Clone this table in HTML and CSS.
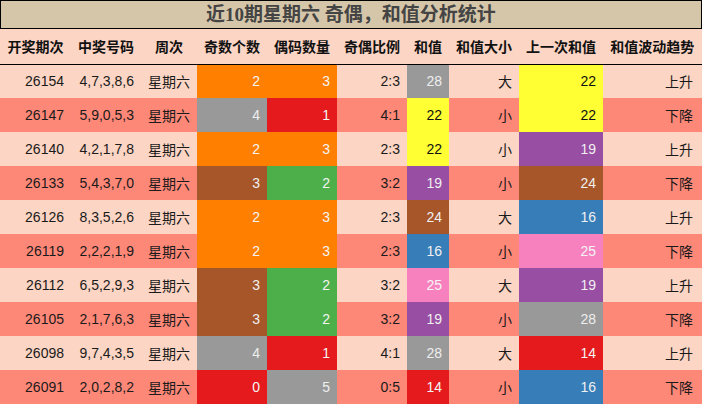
FILE: index.html
```html
<!DOCTYPE html>
<html lang="zh">
<head>
<meta charset="utf-8">
<title>近10期星期六 奇偶，和值分析统计</title>
<link rel="stylesheet" href="styles.css">
</head>
<body>
<div class="title">近10期星期六 奇偶，和值分析统计</div>
<table class="stats">
<colgroup>
<col class="w71"><col class="w70"><col class="w56"><col class="w70"><col class="w70"><col class="w70"><col class="w42"><col class="w70"><col class="w84"><col class="w99">
</colgroup>
<thead>
<tr><th>开奖期次</th><th>中奖号码</th><th>周次</th><th>奇数个数</th><th>偶码数量</th><th>奇偶比例</th><th>和值</th><th>和值大小</th><th>上一次和值</th><th>和值波动趋势</th></tr>
</thead>
<tbody>
<tr class="light"><td>26154</td><td>4,7,3,8,6</td><td>星期六</td><td class="c-orange">2</td><td class="c-orange">3</td><td>2:3</td><td class="c-gray">28</td><td>大</td><td class="c-yellow">22</td><td>上升</td></tr>
<tr class="dark"><td>26147</td><td>5,9,0,5,3</td><td>星期六</td><td class="c-gray">4</td><td class="c-red">1</td><td>4:1</td><td class="c-yellow">22</td><td>小</td><td class="c-yellow">22</td><td>下降</td></tr>
<tr class="light"><td>26140</td><td>4,2,1,7,8</td><td>星期六</td><td class="c-orange">2</td><td class="c-orange">3</td><td>2:3</td><td class="c-yellow">22</td><td>小</td><td class="c-purple">19</td><td>上升</td></tr>
<tr class="dark"><td>26133</td><td>5,4,3,7,0</td><td>星期六</td><td class="c-brown">3</td><td class="c-green">2</td><td>3:2</td><td class="c-purple">19</td><td>小</td><td class="c-brown">24</td><td>下降</td></tr>
<tr class="light"><td>26126</td><td>8,3,5,2,6</td><td>星期六</td><td class="c-orange">2</td><td class="c-orange">3</td><td>2:3</td><td class="c-brown">24</td><td>大</td><td class="c-blue">16</td><td>上升</td></tr>
<tr class="dark"><td>26119</td><td>2,2,2,1,9</td><td>星期六</td><td class="c-orange">2</td><td class="c-orange">3</td><td>2:3</td><td class="c-blue">16</td><td>小</td><td class="c-pink">25</td><td>下降</td></tr>
<tr class="light"><td>26112</td><td>6,5,2,9,3</td><td>星期六</td><td class="c-brown">3</td><td class="c-green">2</td><td>3:2</td><td class="c-pink">25</td><td>大</td><td class="c-purple">19</td><td>上升</td></tr>
<tr class="dark"><td>26105</td><td>2,1,7,6,3</td><td>星期六</td><td class="c-brown">3</td><td class="c-green">2</td><td>3:2</td><td class="c-purple">19</td><td>小</td><td class="c-gray">28</td><td>下降</td></tr>
<tr class="light"><td>26098</td><td>9,7,4,3,5</td><td>星期六</td><td class="c-gray">4</td><td class="c-red">1</td><td>4:1</td><td class="c-gray">28</td><td>大</td><td class="c-red">14</td><td>上升</td></tr>
<tr class="dark"><td>26091</td><td>2,0,2,8,2</td><td>星期六</td><td class="c-red">0</td><td class="c-gray">5</td><td>0:5</td><td class="c-red">14</td><td>小</td><td class="c-blue">16</td><td>下降</td></tr>
</tbody>
</table>
</body>
</html>
```
FILE: styles.css
```css
html, body {
  margin: 0;
  padding: 0;
  background: #ffffff;
}
body {
  width: 702px;
  font-family: "Liberation Sans", "Noto Sans CJK SC", sans-serif;
  color: #1a1a1a;
}
.title {
  box-sizing: border-box;
  height: 29px;
  border: 1px solid #000;
  background: #d6c6a9;
  color: #444444;
  font-family: "Liberation Serif", "Noto Sans CJK SC", serif;
  font-weight: bold;
  font-size: 19px;
  line-height: 27px;
  text-align: center;
}
.stats {
  width: 702px;
  border-collapse: collapse;
  table-layout: fixed;
  font-size: 14px;
}
.w71 { width: 71px; }
.w70 { width: 70px; }
.w56 { width: 56px; }
.w42 { width: 42px; }
.w84 { width: 84px; }
.w99 { width: 99px; }
.stats th {
  height: 35px;
  padding: 0;
  background: #fcd5c4;
  border-bottom: 1px solid #000;
  font-weight: bold;
  text-align: center;
  color: #111;
  white-space: nowrap;
  box-sizing: border-box;
}
.stats th:last-child {
  border-right: 1px solid #000;
}
.stats td {
  height: 34px;
  padding: 0 7px 0 0;
  text-align: right;
  white-space: nowrap;
  box-sizing: border-box;
}
.stats td:last-child {
  padding-right: 9px;
}
.light td { background: #fcd5c4; }
.dark td { background: #fe8878; }
.stats td.c-orange { background: #ff7f00; color: #f4f4f4; }
.stats td.c-gray { background: #999999; color: #eeeeee; }
.stats td.c-red { background: #e41a1c; color: #f4f4f4; }
.stats td.c-brown { background: #a65628; color: #f0f0f0; }
.stats td.c-green { background: #4daf4a; color: #f4f4f4; }
.stats td.c-purple { background: #984ea3; color: #f0f0f0; }
.stats td.c-blue { background: #377eb8; color: #f0f0f0; }
.stats td.c-pink { background: #f781bf; color: #f4f4f4; }
.stats td.c-yellow { background: #ffff33; color: #111111; }
```
